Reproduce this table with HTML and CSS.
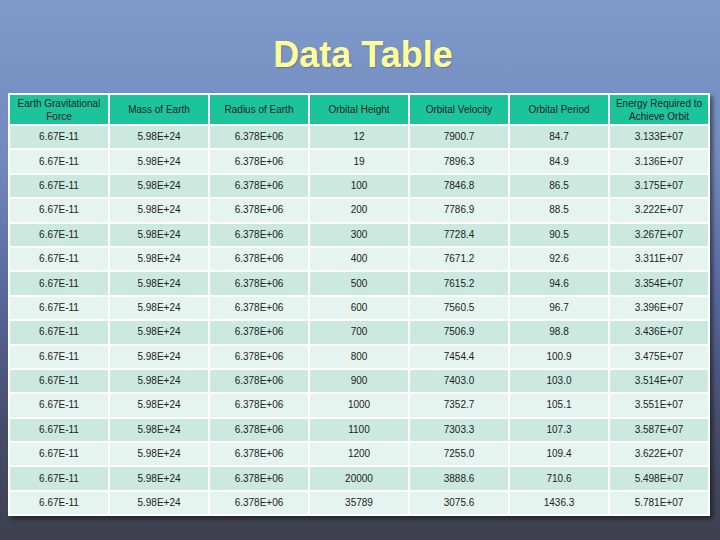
FILE: index.html
```html
<!DOCTYPE html>
<html>
<head>
<meta charset="utf-8">
<link rel="stylesheet" href="styles.css">
</head>
<body>
<div class="slide">
  <h1 class="title">Data Table</h1>
  <table class="data">
    <thead>
      <tr>
        <th>Earth Gravitational Force</th>
        <th>Mass of Earth</th>
        <th>Radius of Earth</th>
        <th>Orbital Height</th>
        <th>Orbital Velocity</th>
        <th>Orbital Period</th>
        <th>Energy Required to Achieve Orbit</th>
      </tr>
    </thead>
    <tbody>
      <tr><td>6.67E-11</td><td>5.98E+24</td><td>6.378E+06</td><td>12</td><td>7900.7</td><td>84.7</td><td>3.133E+07</td></tr>
      <tr><td>6.67E-11</td><td>5.98E+24</td><td>6.378E+06</td><td>19</td><td>7896.3</td><td>84.9</td><td>3.136E+07</td></tr>
      <tr><td>6.67E-11</td><td>5.98E+24</td><td>6.378E+06</td><td>100</td><td>7846.8</td><td>86.5</td><td>3.175E+07</td></tr>
      <tr><td>6.67E-11</td><td>5.98E+24</td><td>6.378E+06</td><td>200</td><td>7786.9</td><td>88.5</td><td>3.222E+07</td></tr>
      <tr><td>6.67E-11</td><td>5.98E+24</td><td>6.378E+06</td><td>300</td><td>7728.4</td><td>90.5</td><td>3.267E+07</td></tr>
      <tr><td>6.67E-11</td><td>5.98E+24</td><td>6.378E+06</td><td>400</td><td>7671.2</td><td>92.6</td><td>3.311E+07</td></tr>
      <tr><td>6.67E-11</td><td>5.98E+24</td><td>6.378E+06</td><td>500</td><td>7615.2</td><td>94.6</td><td>3.354E+07</td></tr>
      <tr><td>6.67E-11</td><td>5.98E+24</td><td>6.378E+06</td><td>600</td><td>7560.5</td><td>96.7</td><td>3.396E+07</td></tr>
      <tr><td>6.67E-11</td><td>5.98E+24</td><td>6.378E+06</td><td>700</td><td>7506.9</td><td>98.8</td><td>3.436E+07</td></tr>
      <tr><td>6.67E-11</td><td>5.98E+24</td><td>6.378E+06</td><td>800</td><td>7454.4</td><td>100.9</td><td>3.475E+07</td></tr>
      <tr><td>6.67E-11</td><td>5.98E+24</td><td>6.378E+06</td><td>900</td><td>7403.0</td><td>103.0</td><td>3.514E+07</td></tr>
      <tr><td>6.67E-11</td><td>5.98E+24</td><td>6.378E+06</td><td>1000</td><td>7352.7</td><td>105.1</td><td>3.551E+07</td></tr>
      <tr><td>6.67E-11</td><td>5.98E+24</td><td>6.378E+06</td><td>1100</td><td>7303.3</td><td>107.3</td><td>3.587E+07</td></tr>
      <tr><td>6.67E-11</td><td>5.98E+24</td><td>6.378E+06</td><td>1200</td><td>7255.0</td><td>109.4</td><td>3.622E+07</td></tr>
      <tr><td>6.67E-11</td><td>5.98E+24</td><td>6.378E+06</td><td>20000</td><td>3888.6</td><td>710.6</td><td>5.498E+07</td></tr>
      <tr><td>6.67E-11</td><td>5.98E+24</td><td>6.378E+06</td><td>35789</td><td>3075.6</td><td>1436.3</td><td>5.781E+07</td></tr>
    </tbody>
  </table>
</div>
</body>
</html>
```
FILE: styles.css
```css
html, body {
  margin: 0;
  padding: 0;
}
body {
  width: 720px;
  height: 540px;
  overflow: hidden;
  font-family: "Liberation Sans", Arial, sans-serif;
}
.slide {
  width: 720px;
  height: 540px;
  background: linear-gradient(to bottom, #7f9acb 0%, #7289bd 30%, #58679a 55%, #474d6c 78%, #3e404d 100%);
  padding: 0 0 0 8px;
  box-sizing: border-box;
}
.title {
  margin: 0;
  height: 93px;
  padding-top: 35px;
  box-sizing: border-box;
  width: 710px;
  text-align: center;
  font-family: "Liberation Sans", Arial, sans-serif;
  font-weight: bold;
  font-size: 36px;
  line-height: 40px;
  color: #ffff99;
  text-shadow: 1px 1px 1px rgba(40, 50, 90, 0.3);
}
.data {
  border-collapse: separate;
  border-spacing: 2px;
  background: #ffffff;
  width: 702px;
  table-layout: fixed;
  box-shadow: 3px 3px 4px rgba(0, 0, 0, 0.45);
}
.data th,
.data td {
  width: 98px;
  padding: 0 3px;
  text-align: center;
  vertical-align: middle;
  font-size: 10px;
  color: #222222;
  box-sizing: border-box;
}
.data th {
  height: 29px;
  background: #1cc49b;
  font-weight: normal;
  line-height: 13px;
}
.data td {
  height: 22.4px;
  line-height: 12px;
}
.data tbody tr:nth-child(odd) td {
  background: #cce9df;
}
.data tbody tr:nth-child(even) td {
  background: #e6f4ef;
}
```
